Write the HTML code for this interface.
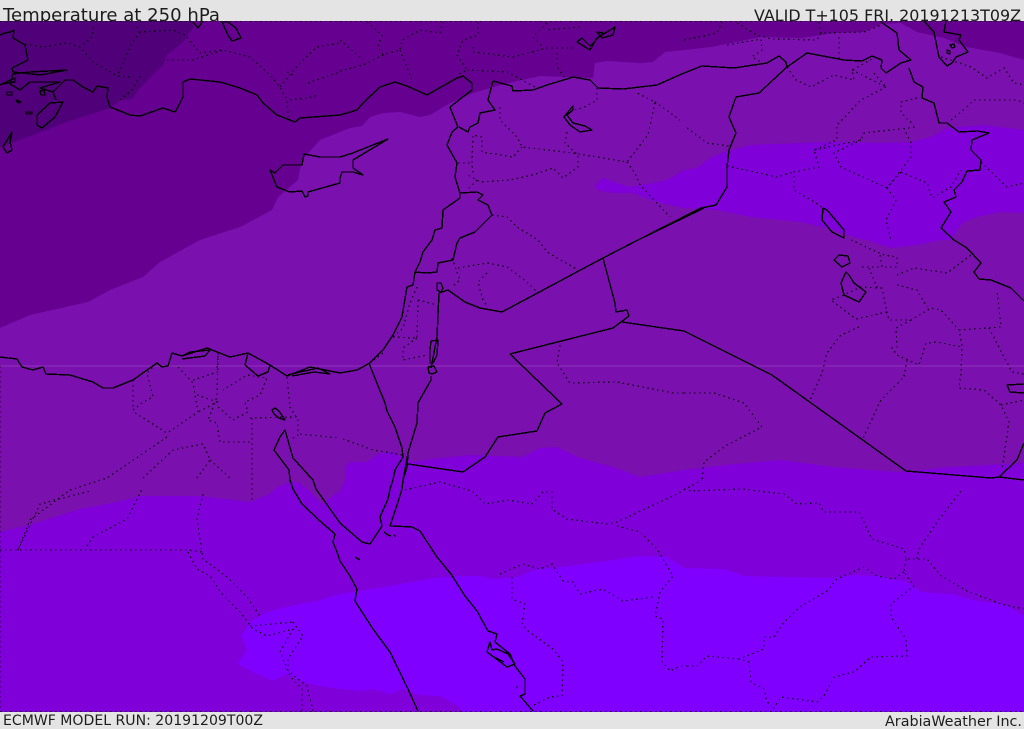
<!DOCTYPE html>
<html>
<head>
<meta charset="utf-8">
<title>Temperature at 250 hPa</title>
<style>
html,body{margin:0;padding:0;background:#e4e4e4;width:1024px;height:729px;overflow:hidden}
svg{display:block}
text{font-family:"DejaVu Sans","Liberation Sans",sans-serif;fill:#1c1c1c}
.c{fill:none;stroke:#000;stroke-width:1.4;stroke-linejoin:round}
.d{fill:none;stroke:#000;stroke-width:1.3;stroke-dasharray:1.5 3.5;opacity:.85}
</style>
</head>
<body>
<svg width="1024" height="729" viewBox="0 0 1024 729" xmlns="http://www.w3.org/2000/svg">
<rect width="1024" height="729" fill="#e4e4e4"/>
<text x="3" y="21" font-size="18" textLength="217" lengthAdjust="spacingAndGlyphs">Temperature at 250 hPa</text>
<text x="754" y="21" font-size="16" textLength="267" lengthAdjust="spacingAndGlyphs">VALID T+105 FRI. 20191213T09Z</text>
<text x="3" y="725" font-size="14" textLength="260" lengthAdjust="spacingAndGlyphs">ECMWF MODEL RUN: 20191209T00Z</text>
<text x="885" y="726" font-size="14" textLength="137" lengthAdjust="spacingAndGlyphs">ArabiaWeather Inc.</text>

<svg x="0" y="21" width="1024" height="691" viewBox="0 21 1024 691">
<rect x="0" y="21" width="1024" height="691" fill="#7a10ae"/>
<!-- level 2 -->
<path fill="#660090" d="M0,328 30,315 88,302 110,290 143,277 160,262 200,240 240,227 272,210 278,197 298,180 302,160 320,140 340,132 350,128 362,126 370,117 383,113 400,112 420,117 430,115 450,103 473,93 497,86 517,81 540,76 567,77 593,78 595,63 607,61 640,63 653,62 665,52 684,50 711,47 731,43 761,37 801,38 834,33 864,32 881,24 901,23 917,32 944,38 967,47 1000,53 1024,60 1024,21 0,21Z"/>
<!-- level 1 -->
<path fill="#500078" d="M0,147 33,135 67,122 110,108 120,100 132,99 140,88 163,65 167,55 183,42 193,28 195,21 0,21Z"/>
<!-- level 4 -->
<path fill="#7f00d8" d="M0,532 33,524 80,509 117,502 140,496 200,496 250,502 270,494 277,487 290,482 300,483 307,489 322,504 340,491 345,480 345,467 350,462 367,462 380,453 393,452 413,462 440,458 470,455 523,457 540,448 557,447 580,458 613,467 640,477 684,470 724,465 781,460 834,467 897,472 951,467 1024,463 1024,712 0,712Z"/>
<path fill="#7f00d8" d="M595,185 603,178 617,183 630,187 653,183 667,180 684,170 697,168 707,160 721,153 751,145 801,143 834,142 884,143 911,142 931,137 947,128 984,125 1024,130 1024,213 1000,212 977,217 962,223 951,240 941,240 917,245 891,248 867,240 857,238 834,230 801,222 751,217 717,210 684,208 657,202 633,193 613,193 597,190Z"/>
<!-- level 5 -->
<path fill="#8000ff" d="M340,594 317,601 300,604 287,607 267,612 250,622 241,636 247,649 238,664 253,672 273,681 287,674 300,681 320,686 340,689 360,691 373,689 390,694 403,689 420,695 440,696 458,706 463,712 1024,712 1024,616 1004,604 977,601 951,594 921,592 907,582 877,576 857,575 831,578 784,577 744,576 724,569 684,568 667,557 640,556 607,561 560,567 537,569 517,577 493,579 480,576 463,576 433,578 390,586Z"/>
<line x1="0" y1="366" x2="1024" y2="366" stroke="#8f35b8" stroke-width="1" shape-rendering="crispEdges"/>

<g class="d" shape-rendering="crispEdges">
<path d="M0,366V712M0,21.5H1024M0,711.5H1024"/>
<path d="M25,44 43,47 67,43 80,47 93,62 107,70 117,76 133,77M93,27 92,37 80,47M137,27 140,32 173,30 185,35 200,53 223,50 250,57 270,75 280,87 287,100 288,117M167,60 193,60 223,50M140,32 132,43 120,70 117,76M140,76 132,90 120,100M280,87 300,63 317,47 340,43M287,72 293,75M308,83 340,72M290,100 307,98 318,95"/>
<path d="M340,71 363,65 383,55 400,50 402,40 420,30 440,33 443,22M340,40 363,60M367,22 382,35 378,47 383,55M400,50 412,80M478,22 478,35 463,40 457,55 467,70 457,75M473,47 473,52 513,57 547,48 573,48M467,70 507,72 537,88M557,53 557,67 565,78M547,23 533,37 543,47M580,27 547,30M597,88 597,100 583,108 573,110M567,132 565,143 578,155 578,167 563,178 553,168 533,175 510,180 480,182 468,175M500,107 500,120 517,137 522,147 573,153 627,162 648,135 655,102 637,93M655,102 680,120M627,162 635,173 640,185 670,217M522,147 513,157 482,152 482,137 473,135 472,163 473,173M458,163 472,163M477,180 467,190M492,215 507,217 517,227 538,240 547,252 578,270"/>
<path d="M684,40 717,33 722,22M737,23 757,35 771,39 817,40 821,33 864,32 881,25M819,22 821,33M727,45 761,39 762,50 752,57 761,62M839,37 839,60M787,67 796,80 811,87 834,75 854,80 852,70 874,58M852,70 886,87M874,73 886,87M886,87 861,100 837,125 837,140 814,150 819,167 794,172 794,190 816,203 823,208M814,150 861,140 864,133 917,127M904,128 911,143 911,157 887,188 841,167 834,153 861,140M887,188 896,200 886,220 891,240M917,98 901,102 901,113 914,125M967,107 974,100 1017,100 1024,103M951,120 967,107M727,166 777,177 794,172M687,128 707,143 729,146M901,172 927,183 932,198 951,187 961,170M901,172 887,188M981,162 1007,187 1024,183M941,57 971,67 987,78 1004,68 1014,83 1024,85"/>
<path d="M851,240 877,252 884,255 897,257 897,267 882,267 880,255M862,267 882,267M869,268 877,287 882,288 887,312 889,320 911,320 931,308 941,310 959,330 962,347 961,373 959,388 984,390 1001,405 1009,422 1002,470M911,320 896,328 897,347 892,348 897,355 919,365 926,343 937,342 962,347M959,330 1001,327 997,290M989,328 1004,357 1012,372 1024,374M1001,405 1024,400M897,275 914,268 947,273 971,255M897,285 917,290 927,307M887,312 856,319 831,300 844,295 861,287 882,288M859,327 841,335 827,353 822,373 810,400M907,360 904,377 881,400 862,440M684,393 714,393 744,403 762,427 727,445 704,462 702,480M560,345 557,363 570,383 617,382 673,393 684,393"/>
<path d="M452,258 460,280 452,287M458,268 487,263 507,267 527,282 537,292M487,273 478,282 483,300 488,307M417,287 410,303 403,328 393,337M418,300 437,305M417,338 403,348 403,360 427,355M383,353 370,363M393,337 417,338 418,300"/>
<path d="M343,439 373,450 403,455M287,377 290,407 298,420 298,435 290,440M300,434 340,438M133,380 133,410 143,402 153,397 147,373 157,363M135,413 167,433 198,412 193,383 178,367M167,437 107,478 70,490 30,520 18,550M197,395 217,402 198,412M193,380 217,372 218,353 217,397 208,420 217,423 220,442 252,442M218,407 233,420 248,412 245,402 260,395 267,378 247,375 223,390M250,418 297,417M252,418V500M143,478 173,450 203,444 210,460 197,478M210,460 230,478M0,550H188L202,552M18,550 40,504 90,491M87,546 93,537 127,519 142,489M203,494 197,519 203,559 227,577 247,597 260,616M188,552 197,569 210,576 222,594 240,612 253,629 267,636 293,629 280,652 290,676 302,689 302,711M293,622 303,636 288,659 288,671 307,686 313,711M250,626 293,622"/>
<path d="M405,490 440,482 472,491 485,504 508,500 532,504 543,492 552,492 552,509 567,519 607,524 617,522 677,494 702,480M617,526 640,532 657,549 673,576 660,592 655,616 663,619 662,662 670,671 680,666 687,666M500,574 523,564 540,569 552,564 563,581 573,582 580,594 603,589 623,601 655,597M512,577 512,599 525,604 522,624 528,631 553,649 563,662 562,696 550,697 532,706"/>
<path d="M684,489 691,491 741,489 784,494 797,504 819,503 824,512 859,512 872,539 904,549 906,559 927,559 941,576 967,591 1001,604 1024,609M961,491 937,522 919,549 917,559M906,559 904,572 914,586 891,604 891,617 906,639 907,656 871,657 854,672 834,677 824,696 817,702 781,697 772,711M904,572 894,579 877,576 864,567 837,579 827,591 801,606 784,622 774,637 764,637 764,649 739,659 749,662 751,682 764,689 767,702 772,706M739,659 707,656 697,666 687,666"/>
</g>

<g class="c" shape-rendering="crispEdges">
<!-- Mediterranean coast, Africa to Levant and Turkey -->
<path d="M0,357 17,359 22,367 33,370 43,367 46,374 70,375 93,382 103,388 113,388 133,380 157,363 162,367 168,366 172,353 182,356 207,348 230,357 248,353 270,365 287,376 310,367 340,373 357,370 370,363 383,350 393,335 402,317 407,287 413,285 415,272 420,262 423,252 432,240 435,230 442,228 443,210 460,198 460,193 455,177 457,163 447,145 452,132 458,127 450,107 472,90 472,83 463,76 457,78 427,95 407,86 395,82 380,87 363,103 357,110 340,115 300,118 295,122 277,115 263,103 257,95 240,88 220,82 190,79 183,82 183,97 178,107 175,112 163,108 140,116 130,115 110,107 107,97 108,88 97,86 93,92 83,87 73,80 65,80 53,92 56,100"/>
<path d="M182,356 190,352 210,350 205,356 182,359M248,353 245,365 258,376 268,372 270,365M288,375 300,372 318,368 330,374 314,372 292,376"/>
<!-- Aegean and islands -->
<path d="M53,92 40,88 60,82 30,82 20,90 10,84 13,74 20,73 30,72 67,70 40,75 13,72 12,68 28,60 25,45 13,38 14,30 10,32 5,33 0,35M0,85 15,78 15,82 2,84ZM63,102 50,103 37,115 37,125 42,128 55,117ZM12,132 3,147 7,153 12,150 10,142Z"/>
<path d="M7,92h5v3h-5ZM16,100l5,2-3,1ZM26,112h6v2h-6ZM40,91l4,-1 1,5-4,0Z"/>
<path d="M222,22 228,35 232,41 241,38 236,28 228,22Z"/>
<path d="M193,22 198,28 203,21"/>
<!-- Cyprus -->
<path d="M270,170 277,187 290,192 302,191 305,197 308,196 308,192 340,183 340,178 342,172 353,172 363,175 353,168 353,160 388,139 353,153 340,157 320,157 304,154 302,165 283,165 275,173Z"/>
<path d="M304,154 320,157"/>
<!-- Jordan, Iraq, Saudi -->
<path d="M638,240 603,258 502,312 480,308 465,302 448,290 439,293 437,337M704,208 638,240M510,354 562,404 545,413 537,431 498,437 485,457 463,472 408,464M510,354 613,328 629,316 627,310 616,312 615,303 603,258M622,322 684,331 772,375 906,471 991,478 999,477 1017,460 1024,443M999,477 1024,480"/>
<path d="M437,337 431,368M431,376 431,380 418,403 417,423 408,453 403,480M369,363 385,403 387,411 395,427 402,448 403,457 395,470 393,480 390,489 388,499 380,517 382,526 370,544 362,542 340,523 316,489 313,480 293,458 285,430 280,437 274,450 289,470 290,480 293,489 302,504 320,521 335,534 333,542 337,552 340,561 350,576 357,589 355,601 373,629 390,652 408,689 418,711"/>
<path d="M408,453 407,467 403,480 402,489 398,502 390,526 393,526 412,527 420,531 437,557 451,574 465,596 477,611 488,631 497,634 495,642 510,654 515,666 525,679 525,694 520,696 533,711"/>
<!-- Dead Sea, Kinneret -->
<path d="M431,341 438,340 437,355 433,363 430,363 430,350ZM428,367 434,366 437,372 432,374 429,373Z"/>
<path d="M437,283 441,283 443,288 441,292 437,290Z"/>
<path d="M272,410 275,408 279,411 285,420 279,418 274,414Z"/>
<path d="M384,532 388,535 391,536M394,535 396,537M355,557 360,560"/>
<path d="M490,642 487,652 507,667 515,664 508,654 497,649 492,650ZM492,656 504,662M516,687h2"/>
<!-- Turkey / Syria / Iraq / Iran -->
<path d="M493,81 512,86 513,91 533,90 547,85 567,79 573,77 590,80 598,88 623,89 657,85 684,73 702,66 734,68 767,63 779,56 786,62 787,67 807,53 844,60 862,61 872,56 882,60 881,68 886,73 901,63 911,60 899,50 897,33 881,22"/>
<path d="M909,68 914,82 923,87 922,98 934,103 939,123 947,123 959,132 977,131 989,133 972,140 971,150 981,160 980,170 967,171 962,182 954,190 956,197 944,202 951,212 941,228 954,240 967,248 981,263 974,272 979,279 991,280 1011,288 1024,301"/>
<path d="M787,67 759,93 736,97 729,117 736,133 729,150 727,167 727,187 716,205 701,208 638,240"/>
<path d="M460,193 477,192 483,195 478,200 488,205 492,215 475,232 460,238 457,243 453,260 438,263 437,272 427,273 415,272"/>
<path d="M493,81 488,100 495,110 480,113 478,123 470,127 468,132 459,127"/>
<!-- lakes -->
<path d="M573,106 564,117 570,125 580,132 592,130 585,126 573,123 567,115 573,110Z"/>
<path d="M615,27 597,38 590,50 577,42 582,38 590,46 603,33 597,32 602,38 613,35Z"/>
<path d="M924,21 934,32 939,57 947,66 952,63 956,57 968,52 959,40 961,35 944,32 946,21"/>
<path d="M950,45l4,-1 1,3-3,1ZM947,50l3,1 0,3-3,-1Z"/>
<path d="M823,208 822,220 832,232 844,238 844,230 827,210Z"/>
<path d="M839,255 834,260 842,267 850,263 848,256ZM846,272 841,283 844,295 859,302 866,292 854,283 849,275Z"/>
<path d="M1024,384 1007,385 1010,392 1024,393"/>
</g>
</svg>
</svg>
</body>
</html>
